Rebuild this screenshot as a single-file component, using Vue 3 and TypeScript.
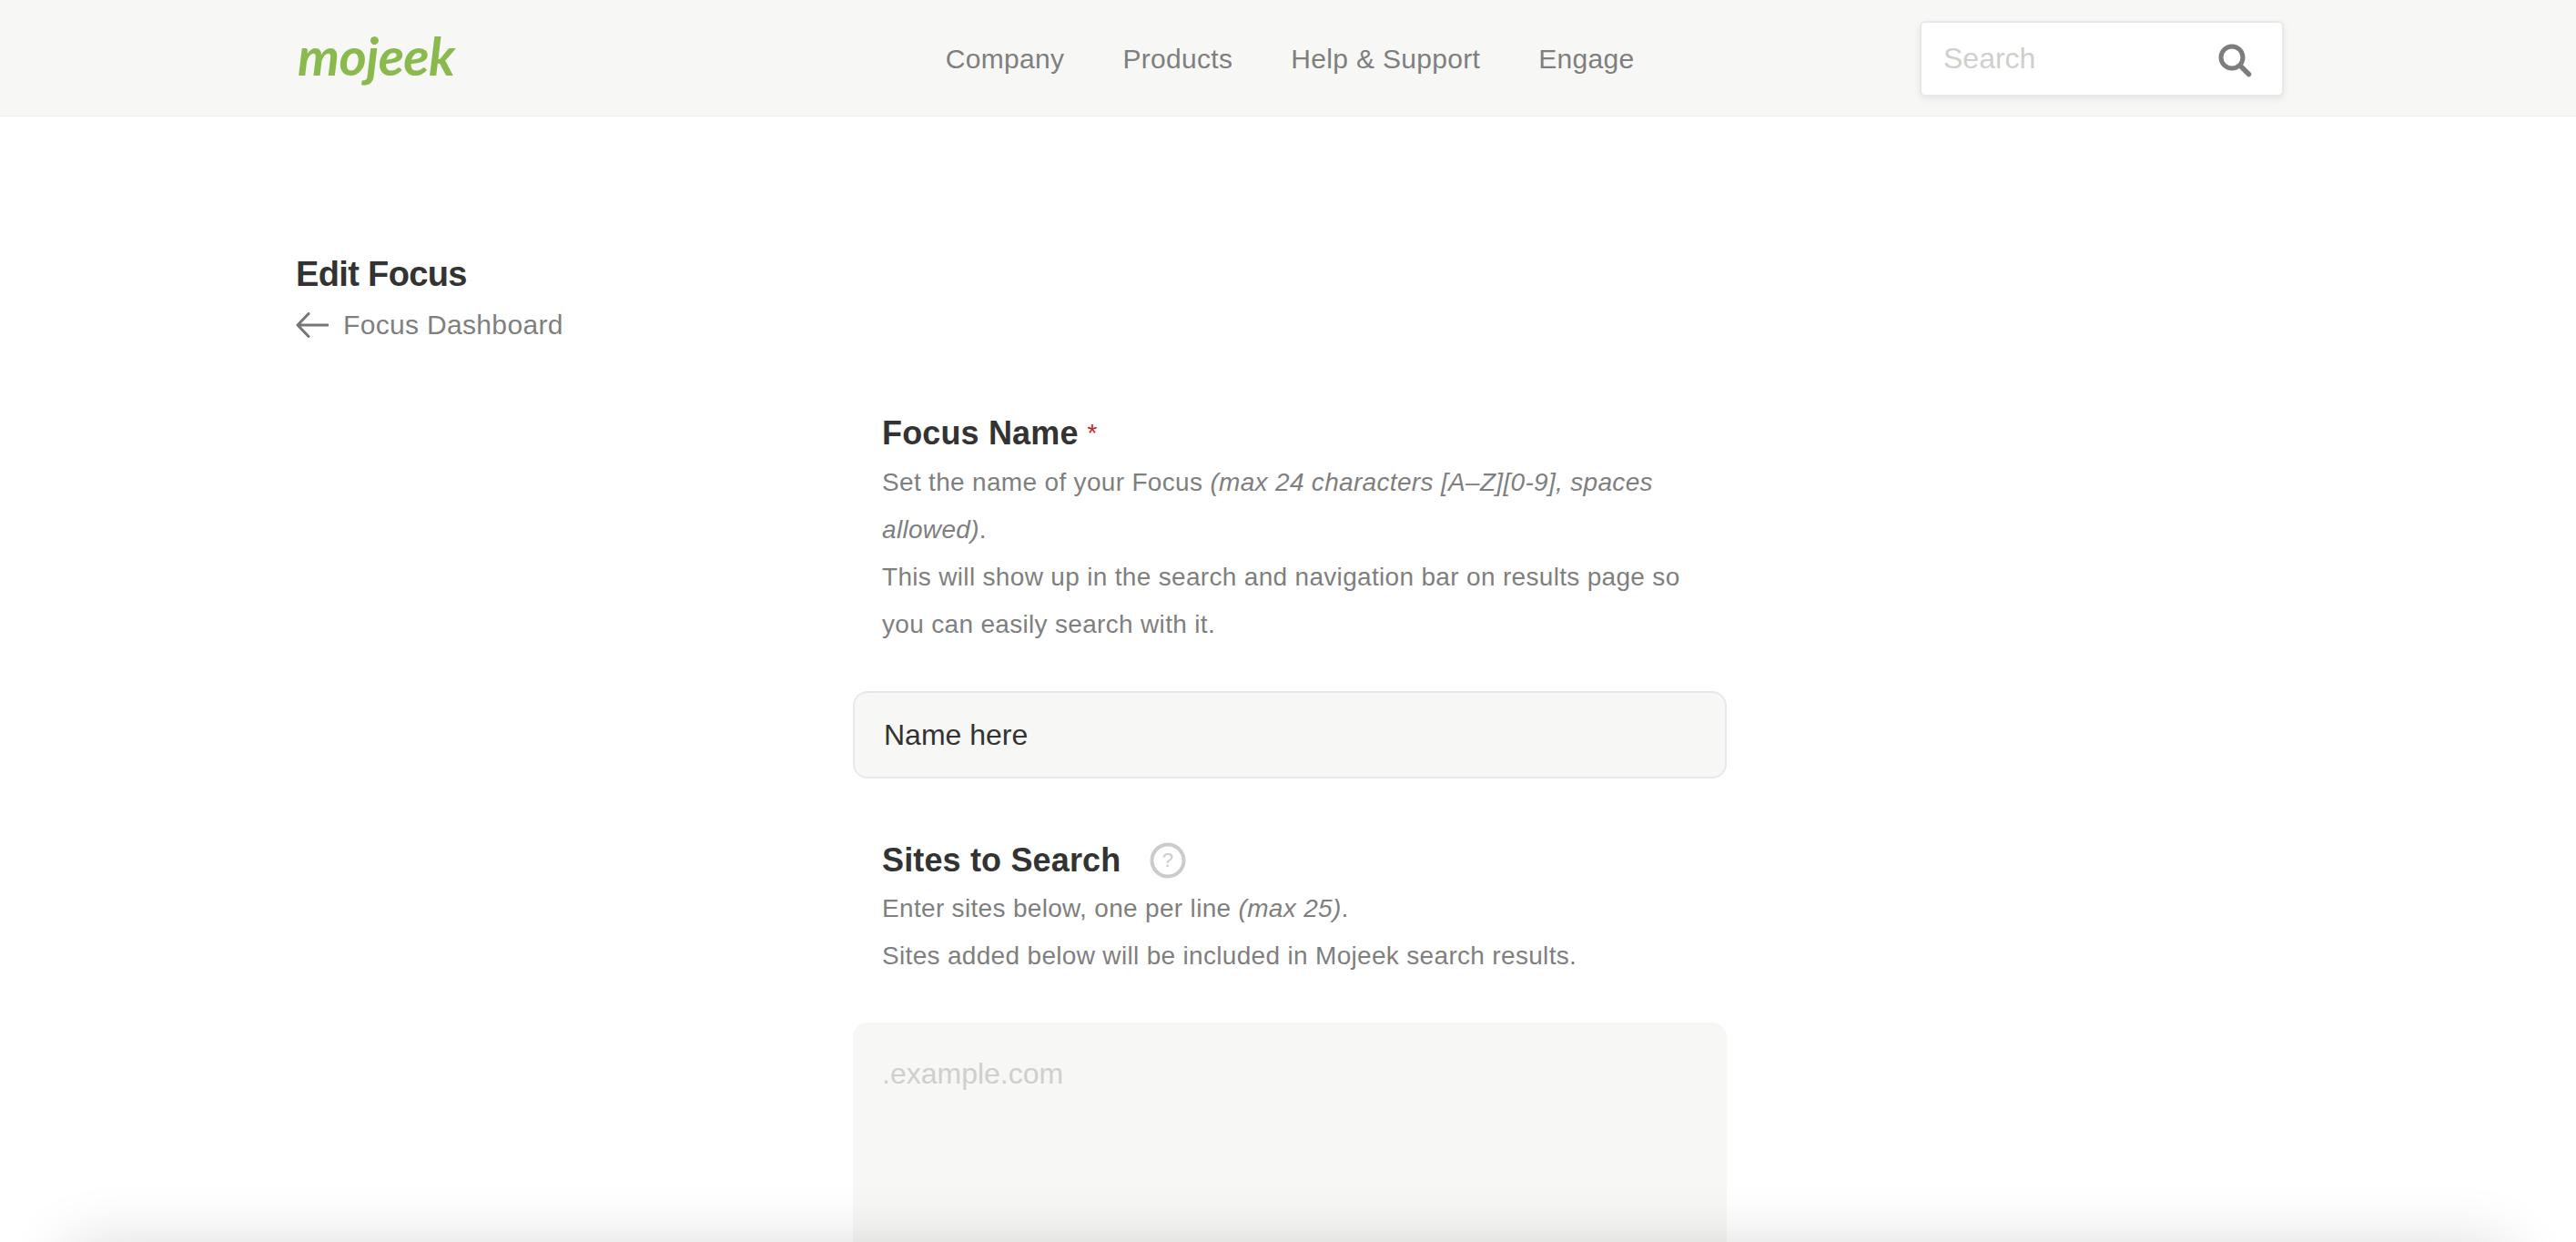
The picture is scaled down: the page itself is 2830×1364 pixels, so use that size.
<script setup lang="ts">
const navItems: string[] = ['Company', 'Products', 'Help & Support', 'Engage']
</script>

<template>
  <div class="page">
    <header class="header">
      <div class="header-inner">
        <a class="logo">mojeek</a>
        <nav class="nav">
          <a v-for="item in navItems" :key="item" class="nav-link">{{ item }}</a>
        </nav>
        <div class="search">
          <span class="search-ph">Search</span>
          <svg class="search-icon" width="38" height="38" viewBox="0 0 38 38" fill="none">
            <circle cx="16" cy="16" r="12" stroke="#7d7d7d" stroke-width="5" />
            <path d="M25 25l9.5 9.5" stroke="#7d7d7d" stroke-width="5.5" stroke-linecap="round" />
          </svg>
        </div>
      </div>
    </header>

    <main class="main">
      <h1 class="title">Edit Focus</h1>
      <a class="back">
        <svg width="36" height="28" viewBox="0 0 36 28" fill="none">
          <path d="M35 14H3M14 1.5L2 14l12 12.5" stroke="#767676" stroke-width="3" stroke-linecap="round" stroke-linejoin="round" />
        </svg>
        <span>Focus Dashboard</span>
      </a>

      <form class="form">
        <div class="intro">
          <h2 class="label">Focus Name <span class="req">*</span></h2>
          <p class="desc">Set the name of your Focus <em>(max 24 characters [A–Z][0-9], spaces allowed)</em>.<br />This will show up in the search and navigation bar on results page so you can easily search with it.</p>
        </div>
        <div class="input">Name here</div>
        <div class="intro second">
          <h2 class="label">Sites to Search
            <svg class="help" width="40" height="40" viewBox="0 0 40 40" fill="none">
              <circle cx="20" cy="20" r="17.5" stroke="#cbcbcb" stroke-width="4" />
              <text x="20" y="27" text-anchor="middle" class="help-q">?</text>
            </svg>
          </h2>
          <p class="desc">Enter sites below, one per line <em>(max 25)</em>.<br />Sites added below will be included in Mojeek search results.</p>
        </div>
        <div class="textarea">.example.com</div>
      </form>
    </main>
    <div class="bottom-shade"></div>
  </div>
</template>

<style>
html, body { margin: 0; overflow: hidden; height: 100%; background: #fff; }
</style>

<style scoped>
.page {
  font-family: "Liberation Sans", Arial, sans-serif;
  color: #333;
  height: 1364px;
  overflow: hidden;
}
.header {
  height: 127px;
  background: #f7f7f5;
  border-bottom: 1px solid #efefed;
}
.header-inner {
  position: relative;
  display: flex;
  align-items: center;
  justify-content: space-between;
  height: 100%;
  margin: 0 321px 0 327px;
}
.logo {
  font-family: "Lato", sans-serif;
  font-style: italic;
  font-weight: 700;
  font-size: 58px;
  letter-spacing: -0.6px;
  color: #8aba4e;
  line-height: 1;
  margin-top: -6px;
}
.nav {
  display: flex;
  gap: 64px;
  margin-left: 226px;
  margin-top: 2px;
}
.nav-link {
  font-size: 30px;
  color: #7f7f7f;
  letter-spacing: 0.32px;
}
.search {
  box-sizing: border-box;
  width: 400px;
  height: 83px;
  margin-top: 2px;
  background: #fff;
  border: 2px solid #e8e8e8;
  border-radius: 6px;
  box-shadow: 0 3px 8px rgba(0, 0, 0, 0.07);
  display: flex;
  align-items: center;
  justify-content: space-between;
  padding: 0 33px 0 24px;
}
.search-ph {
  font-size: 32px;
  color: #cfcfcb;
  margin-top: -1px;
}
.search-icon { margin-top: 2px; }
.main {
  padding: 150px 325px 0;
}
.title {
  margin: 0;
  font-size: 38px;
  line-height: 46px;
  font-weight: 700;
  letter-spacing: -0.65px;
  color: #333;
}
.back {
  display: flex;
  align-items: center;
  gap: 16px;
  margin-top: 11px;
  font-size: 30px;
  line-height: 44px;
  color: #7f7f7f;
  letter-spacing: 0.33px;
}
.form {
  width: 960px;
  margin: 73px 0 0 612px;
}
.intro {
  padding: 0 32px;
}
.second { margin-top: 66px; }
.second .desc { margin-top: 3px; }
.label {
  margin: 0;
  display: flex;
  align-items: center;
  font-size: 36px;
  line-height: 48px;
  font-weight: 700;
  letter-spacing: 0.15px;
  color: #333;
}
.req {
  color: #c62828;
  font-size: 28px;
  font-weight: 400;
  margin-left: 10px;
}
.help { margin-left: 32px; }
.help-q {
  font-family: "Liberation Sans", sans-serif;
  font-size: 22px;
  font-weight: 400;
  fill: #cbcbcb;
}
.desc {
  margin: 4px 0 0;
  font-size: 28px;
  line-height: 52px;
  color: #7f7f7f;
  letter-spacing: 0.32px;
}
.input {
  box-sizing: border-box;
  margin-top: 47px;
  height: 96px;
  background: #f7f7f5;
  border: 2px solid #e8e8e8;
  border-radius: 16px;
  padding-left: 32px;
  display: flex;
  align-items: center;
  font-size: 32px;
  color: #333;
}
.textarea {
  box-sizing: border-box;
  margin-top: 47px;
  height: 500px;
  background: #f7f7f5;
  border-radius: 16px;
  padding: 38px 32px;
  font-size: 32px;
  color: #cfcfcb;
}
.bottom-shade {
  position: fixed;
  left: 90px;
  right: 90px;
  bottom: -70px;
  height: 50px;
  box-shadow: 0 0 70px 14px rgba(0, 0, 0, 0.16);
}
</style>
